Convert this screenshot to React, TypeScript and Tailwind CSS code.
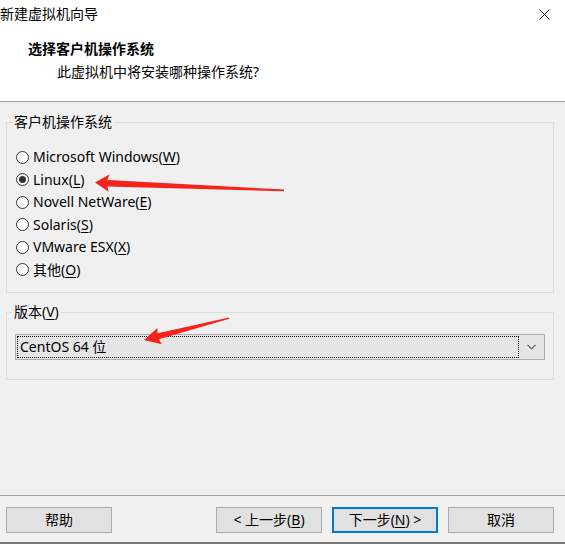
import React from 'react';

const FONT = { fontFamily: '"Noto Sans", "Noto Sans CJK SC", sans-serif' };

const OS_OPTIONS = [
  { label: 'Microsoft Windows', key: 'W' },
  { label: 'Linux', key: 'L', checked: true },
  { label: 'Novell NetWare', key: 'E' },
  { label: 'Solaris', key: 'S' },
  { label: 'VMware ESX', key: 'X' },
  { label: '其他', key: 'O' },
];

function Mnemonic({ k }: { k: string }) {
  return (
    <>
      (<span className="underline underline-offset-2">{k}</span>)
    </>
  );
}

function Radio({ checked }: { checked?: boolean }) {
  return (
    <span className="flex h-[13px] w-[13px] shrink-0 items-center justify-center rounded-full border border-[#333333] bg-white">
      {checked && <span className="h-[7px] w-[7px] rounded-full bg-[#333333]" />}
    </span>
  );
}

function Button({ children, focused }: { children: React.ReactNode; focused?: boolean }) {
  return (
    <button
      className={
        focused
          ? 'flex h-[26px] w-[106px] items-center justify-center border-2 border-[#0078d7] bg-[#e1e1e1] text-[14px] leading-[20px] text-black'
          : 'flex h-[26px] w-[106px] items-center justify-center border border-[#adadad] bg-[#e1e1e1] text-[14px] leading-[20px] text-black'
      }
    >
      {children}
    </button>
  );
}

function Arrows() {
  return (
    <svg className="pointer-events-none absolute inset-0" width={565} height={544} viewBox="0 0 565 544">
      <polygon
        fill="#f5231c"
        points="95,182.5 109.4,174.4 107.5,179.9 284,189.6 284,191.2 107.5,186.6 108.6,191.8"
      />
      <polygon
        fill="#f5231c"
        points="144,340 157.4,328 157.6,333.3 229,317.4 229.3,318.8 158.9,339.3 161.8,344.2"
      />
    </svg>
  );
}

export default function App() {
  return (
    <div className="relative flex h-[544px] w-[565px] flex-col overflow-hidden bg-[#f0f0f0] text-black" style={FONT}>
      {/* header */}
      <div className="h-[102px] shrink-0 border-b border-[#a0a0a0] bg-white">
        <div className="flex h-[28px] items-center justify-between pr-[15px]">
          <span className="text-[14px] leading-[20px]">新建虚拟机向导</span>
          <svg width="11" height="11" viewBox="0 0 11 11">
            <path d="M0.5 0.5 L10.5 10.5 M10.5 0.5 L0.5 10.5" stroke="#111" strokeWidth="1" fill="none" />
          </svg>
        </div>
        <div className="pl-[28px] pt-[11px] text-[14px] font-bold leading-[20px]">选择客户机操作系统</div>
        <div className="pl-[57px] pt-[3px] text-[14px] leading-[20px]">此虚拟机中将安装哪种操作系统?</div>
      </div>

      {/* body */}
      <div className="flex-1 pt-[10px]">
        <fieldset className="ml-[6px] w-[548px] border border-[#dcdcdc] pb-[11px] pl-[9px]">
          <legend className="ml-[-4px] px-[2px] text-[14px] leading-[20px]">客户机操作系统</legend>
          <div className="flex flex-col pt-[14px]">
            {OS_OPTIONS.map((o) => (
              <div key={o.key} className="flex h-[22.5px] items-center gap-[4px]">
                <Radio checked={o.checked} />
                <span className="text-[14px] leading-[20px]">
                  {o.label}
                  <Mnemonic k={o.key} />
                </span>
              </div>
            ))}
          </div>
        </fieldset>

        <fieldset className="ml-[6px] mt-[9px] w-[548px] border border-[#dcdcdc] px-[8px] pb-[19px]">
          <legend className="ml-[-3px] px-[2px] text-[14px] leading-[20px]">
            版本<Mnemonic k="V" />
          </legend>
          <div className="mt-[12px] flex h-[26px] items-center border border-[#adadad] bg-[#e5e5e5] p-[1px]">
            <div className="flex h-full flex-1 items-center border border-dotted border-black pl-[2px] text-[14px] leading-[20px]">
              CentOS 64 位
            </div>
            <div className="flex w-[24px] items-center justify-center">
              <svg width="9" height="6" viewBox="0 0 9 6">
                <path d="M0.5 0.8 L4.5 4.8 L8.5 0.8" stroke="#555" strokeWidth="1.1" fill="none" />
              </svg>
            </div>
          </div>
        </fieldset>
      </div>

      {/* footer */}
      <div className="flex h-[49px] shrink-0 items-start border-t border-b-2 border-t-[#a0a0a0] border-b-[#7a7a7a] pl-[6px] pr-[11px] pt-[11px]">
        <Button>帮助</Button>
        <div className="ml-auto flex gap-[10px]">
          <Button>
            &lt; 上一步
            <Mnemonic k="B" />
          </Button>
          <Button focused>
            下一步
            <Mnemonic k="N" /> &gt;
          </Button>
          <Button>取消</Button>
        </div>
      </div>

      <Arrows />
    </div>
  );
}
